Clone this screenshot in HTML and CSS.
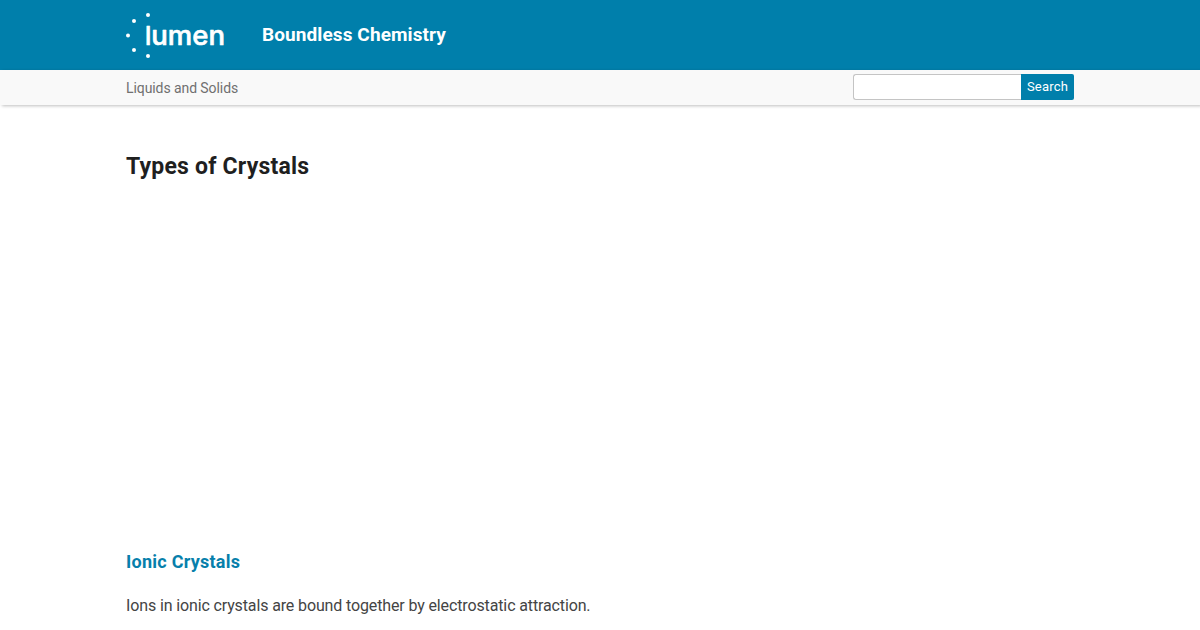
FILE: index.html
```html
<!DOCTYPE html>
<html lang="en">
  <head>
    <meta charset="UTF-8" />
    <title>Types of Crystals | Boundless Chemistry</title>
    <link rel="stylesheet" href="styles.css">
  </head>
  <body>
    <header class="header">
      <div class="container header-inner">
        <svg class="logo" width="100" height="50" viewBox="0 0 100 50" role="img" aria-label="lumen">
          <g fill="#fff">
            <circle cx="22" cy="5" r="2" />
            <circle cx="8" cy="11" r="2" />
            <circle cx="2" cy="25.5" r="2" />
            <circle cx="8" cy="40" r="2" />
            <circle cx="22" cy="46" r="2" />
          </g>
          <text class="wordmark" y="34.7"><tspan class="wordmark-l" x="19">l</tspan><tspan x="25.3" textLength="73.7" lengthAdjust="spacingAndGlyphs">umen</tspan></text>
        </svg>
        <div class="book-title">Boundless Chemistry</div>
      </div>
    </header>
    <nav class="nav">
      <div class="container nav-inner">
        <span class="part-title">Liquids and Solids</span>
        <form class="search">
          <input class="search-field" type="text" aria-label="Search">
          <button class="search-btn" type="button"><span>Search</span></button>
        </form>
      </div>
    </nav>
    <main class="container content">
      <h1><span>Types of Crystals</span></h1>
      <div class="video"></div>
      <h2><span>Ionic Crystals</span></h2>
      <p><span>Ions in ionic crystals are bound together by electrostatic attraction.</span></p>
    </main>
  </body>
</html>
```
FILE: styles.css
```css
* {
  box-sizing: border-box;
  margin: 0;
  padding: 0;
}

body {
  background-color: #fff;
  color: #444;
  font-family: Roboto, "Liberation Sans", sans-serif;
  overflow: hidden;
}

.container {
  width: 948px;
  margin: 0 auto;
}

.header {
  height: 70px;
  background-color: #007fab;
}

.header-inner {
  display: flex;
  align-items: center;
  height: 70px;
}

.logo {
  margin-right: 36px;
}

.wordmark {
  fill: #fff;
  stroke: #fff;
  stroke-width: 0.6px;
  stroke-linejoin: round;
  font-family: Inter, sans-serif;
  font-size: 27px;
  font-weight: 500;
}

.wordmark-l {
  font-size: 25px;
}

.book-title {
  padding-bottom: 2px;
  color: #fff;
  font-size: 19px;
  font-weight: bold;
  letter-spacing: 0.1px;
}

.nav {
  height: 35px;
  background-color: #f9f9f9;
  box-shadow: 2px 1px 3px rgba(0, 0, 0, 0.25);
}

.nav-inner {
  display: flex;
  justify-content: space-between;
  padding-top: 4px;
}

.part-title {
  color: #707070;
  font-size: 14px;
  line-height: 29px;
  letter-spacing: -0.08px;
}

.search {
  display: flex;
}

.search-field {
  width: 168px;
  height: 26px;
  border: 1px solid #c4c4c4;
  border-right: 0;
  border-radius: 3px 0 0 3px;
  background-color: #fff;
}

.search-btn {
  width: 53px;
  height: 26px;
  padding-bottom: 1px;
  border: 0;
  border-radius: 0 2px 2px 0;
  background-color: #007fab;
  color: #fff;
  font-family: inherit;
  font-size: 13px;
  letter-spacing: 0.2px;
}

.content {
  padding-top: 47px;
}

h1 {
  color: #1f1f1f;
  font-size: 23px;
  font-weight: bold;
  line-height: 30px;
  letter-spacing: 0.2px;
}

/* space kept for the embedded video */
.video {
  height: 365px;
}

h2 {
  color: #077fab;
  font-size: 18px;
  font-weight: bold;
  line-height: 30px;
  letter-spacing: 0.25px;
}

p {
  margin-top: 14px;
  font-size: 16px;
  line-height: 30px;
  letter-spacing: -0.13px;
}
```
